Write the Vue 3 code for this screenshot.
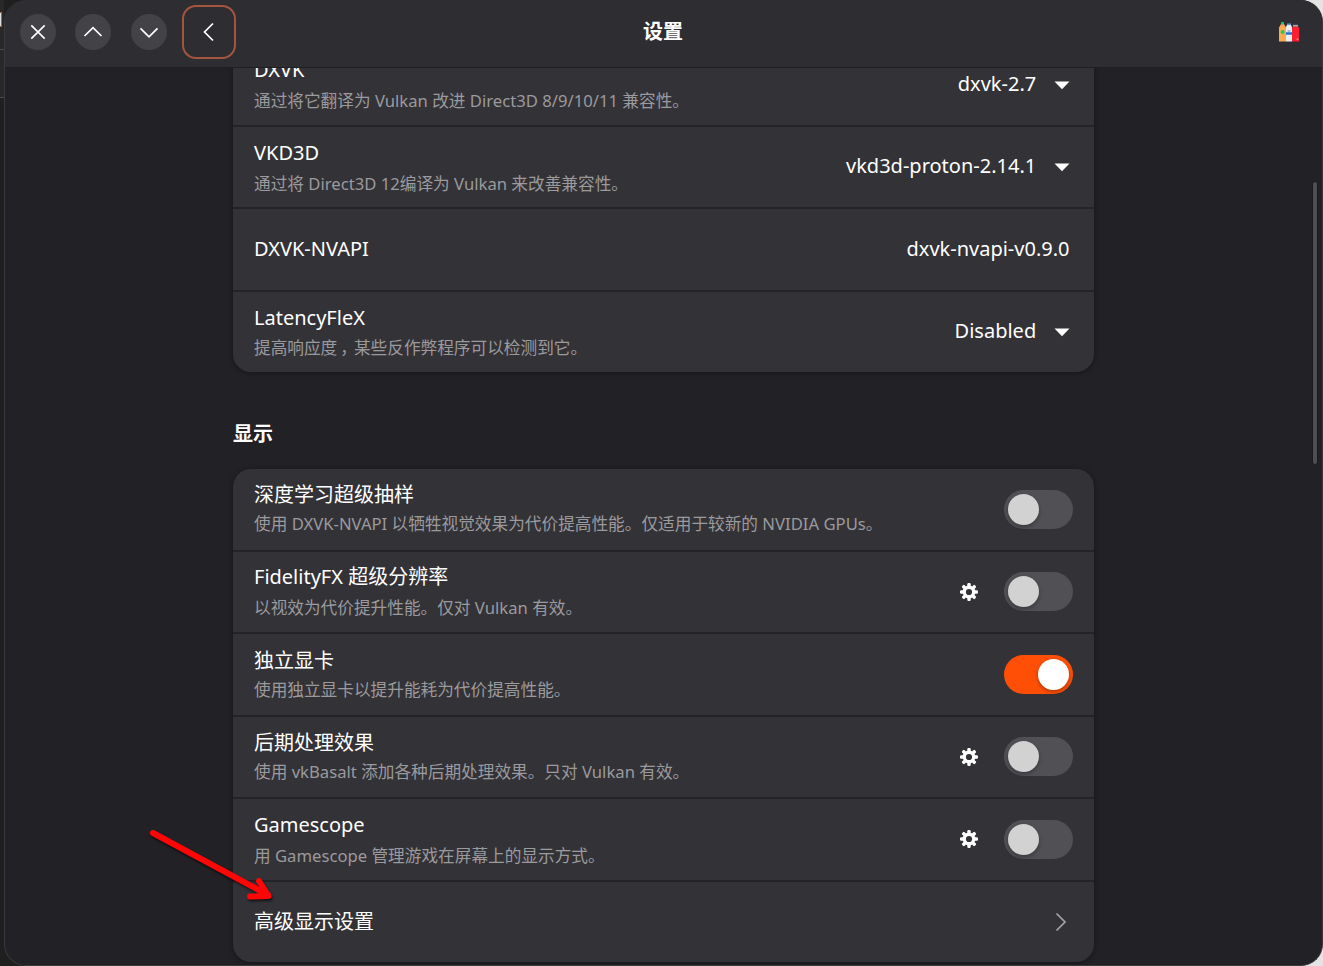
<script setup>
const runtime = [
  { title: 'DXVK', sub: ['通过将它翻译为 Vulkan 改进 Direct3D 8/9/10/11 兼容性。'], value: 'dxvk-2.7', menu: true },
  { title: 'VKD3D', sub: ['通过将 Direct3D 12编译为 Vulkan 来改善兼容性。'], value: 'vkd3d-proton-2.14.1', menu: true },
  { title: 'DXVK-NVAPI', value: 'dxvk-nvapi-v0.9.0' },
  { title: 'LatencyFleX', sub: ['提高响应度', '，', '某些反作弊程序可以检测到它。'], value: 'Disabled', menu: true },
]
const display = [
  { title: '深度学习超级抽样', sub: '使用 DXVK-NVAPI 以牺牲视觉效果为代价提高性能。仅适用于较新的 NVIDIA GPUs。', tone: 'cjk' },
  { title: 'FidelityFX 超级分辨率', sub: '以视效为代价提升性能。仅对 Vulkan 有效。', gear: true, tone: 'latin' },
  { title: '独立显卡', sub: '使用独立显卡以提升能耗为代价提高性能。', on: true, tone: 'pure' },
  { title: '后期处理效果', sub: '使用 vkBasalt 添加各种后期处理效果。只对 Vulkan 有效。', gear: true, tone: 'cjk' },
  { title: 'Gamescope', sub: '用 Gamescope 管理游戏在屏幕上的显示方式。', gear: true, tone: 'latin' },
]
</script>

<template>
  <div class="desktop">
    <div class="behind"><i class="chip"></i></div>
    <div class="window">
      <header class="bar">
        <div class="controls">
          <button class="round"><svg width="36" height="36" viewBox="0 0 36 36"><path d="M11.3 11.3 24.7 24.7M24.7 11.3 11.3 24.7" /></svg></button>
          <button class="round"><svg width="36" height="36" viewBox="0 0 36 36"><path d="M9.5 22 18 13.6 26.500 22" /></svg></button>
          <button class="round"><svg width="36" height="36" viewBox="0 0 36 36"><path d="M9.500 14.300 18 22.800 26.500 14.300" /></svg></button>
          <button class="back"><svg width="36" height="36" viewBox="0 0 36 36"><path d="M22 9.500 13.500 18 22 26.500" /></svg></button>
        </div>
        <h1>设置</h1>
        <svg class="app" width="22" height="22" viewBox="0 0 22 22">
          <path d="M3 3h3l2 3.500V20.500H1V6.500z" fill="#fdab4f" />
          <rect x="3" y="1" width="3" height="2" rx=".6" fill="#16c65b" />
          <rect x="3" y="3" width="3" height="1.300" fill="#b99a78" />
          <circle cx="4.600" cy="11" r="2" fill="#20cf55" />
          <path d="M9 4h4l1 2V20.500H8V6z" fill="#eeeef0" />
          <rect x="9" y="2.500" width="4" height="1.600" fill="#5b9be8" />
          <path d="M9.500 9h3v2.500h-3z" fill="#9dbdec" />
          <path d="M8 11.200h6v2.600H8z" fill="#1f73d8" />
          <rect x="15" y="3.800" width="5" height="2" fill="#aaa6a6" />
          <path d="M14.700 5.800h5.500l1 1.500v13.200H14V7z" fill="#fb1f2f" />
          <path d="M18.500 17.500h2v1.500h-2z" fill="#ff8088" />
        </svg>
      </header>

      <main class="scroll">
        <div class="column">
          <section class="card first">
            <div v-for="r in runtime" :key="r.title" class="row">
              <div class="text">
                <div class="title">{{ r.title }}</div>
                <div v-if="r.sub" class="sub"><span v-for="(s, i) in r.sub" :key="i" :class="{ comma: s === '，' }">{{ s }}</span></div>
              </div>
              <div class="value">{{ r.value }}</div>
              <svg v-if="r.menu" class="caret" width="16" height="9" viewBox="0 0 16 9"><path d="M.5.5h15L8 8.300z" /></svg>
            </div>
          </section>

          <h2>显示</h2>

          <section class="card second">
            <div v-for="r in display" :key="r.title" class="row switchrow" :class="r.tone">
              <div class="text">
                <div class="title">{{ r.title }}</div>
                <div class="sub">{{ r.sub }}</div>
              </div>
              <svg v-if="r.gear" class="gear" width="18" height="18" viewBox="-9 -9 18 18">
                <g fill="#fff">
                  <rect v-for="a in 4" :key="a" x="-1.700" y="-9" width="3.400" height="18" rx="1.200" :transform="`rotate(${a * 45})`" />
                  <circle r="6.400" />
                </g>
                <circle r="3.100" fill="#333237" />
              </svg>
              <div class="switch" :class="{ on: r.on }"><i></i></div>
            </div>
            <div class="row switchrow">
              <div class="text"><div class="title">高级显示设置</div></div>
              <svg class="next" width="12" height="20" viewBox="0 0 12 20"><path d="M1.500 1.500 10 10 1.500 18.500" /></svg>
            </div>
          </section>
        </div>
        <i class="thumb"></i>
      </main>
    </div>
    <svg class="arrow" width="140" height="90" viewBox="0 0 140 90">
      <path d="M13 13 128 75" />
      <path d="M119 61 128.500 76 110 76.500" />
    </svg>
  </div>
</template>

<style>
body { margin: 0; background: #222126; overflow: hidden; }
</style>

<style scoped>
* { box-sizing: border-box; }
.desktop {
  position: relative; width: 1323px; height: 966px; overflow: hidden;
  background: linear-gradient(90deg, #1f1f1f 0, #1f1f1f 600px, #e4e4e4 600px);
  font-family: "Noto Sans", "Noto Sans CJK SC", sans-serif; color: #fff;
  display: flex;
}
.behind { width: 4px; height: 98px; flex: none; background: #282828; border-bottom: 1px solid #4a4a4a; padding-top: 12px; background-image: linear-gradient(#4a4a4a, #4a4a4a); background-size: 4px 1px; background-position: 0 49px; background-repeat: no-repeat; }
.chip { display: block; width: 2px; height: 15px; background: #dedede; border: solid #a0643c; border-width: 1px 1px 1px 0; }
.window {
  width: 1319px; height: 966px; flex: none; border: 1px solid #39383b; border-top: 0;
  border-radius: 22px; overflow: hidden; background: #222126;
  display: flex; flex-direction: column;
}
.bar { height: 68px; flex: none; background: #2e2d32; border-bottom: 1px solid #1f1e22; display: grid; grid-template-columns: 1fr auto 1fr; align-items: center; padding: 0 22px 3px 15px; }
.controls { display: flex; align-items: center; gap: 19.400px; }
button { border: 0; padding: 0; background: none; display: flex; align-items: center; justify-content: center; flex: none; }
button svg { fill: none; stroke: #fff; stroke-width: 1.700; display: block; }
.round { width: 36px; height: 36px; border-radius: 50%; background: #434247; }
.back { width: 54px; height: 54px; border: 2px solid #a3553d; border-radius: 14px; margin-left: -4.300px; }
h1 { margin: 0 0 0 6px; font-size: 20px; line-height: 30px; font-weight: 700; }
.app { justify-self: end; }
.scroll { flex: 1; position: relative; overflow: hidden; display: flex; justify-content: center; }
.column { width: 861px; margin-top: -24px; flex: none; }
.card { background: #333237; border-radius: 18px; box-shadow: 0 1px 4px 1px rgba(0,0,0,.28); }
.row { height: 82.500px; display: flex; align-items: center; padding: 0 24.500px 0 21px; border-bottom: 2px solid #242328; }
.row:last-child { height: 80px; border-bottom: 0; }
.switchrow { padding-right: 21px; }
.text { flex: 1; min-width: 0; }
.title { font-size: 20px; line-height: 30px; white-space: nowrap; }
.sub { font-size: 16.670px; line-height: 24px; margin-top: 4px; color: #9b9a9d; white-space: nowrap; }
.first .row:last-child .sub { margin-top: 3px; }
.latin .text { padding-bottom: 1px; }
.cjk .sub { margin-top: 2px; }
.cjk .text { padding-bottom: 2px; }
.pure .sub { margin-top: 2px; }
.comma { margin-left: 3px; margin-right: -3px; }
.value { font-size: 20px; line-height: 30px; padding-bottom: 1px; }
.caret { margin: 2px 0 0 17.300px; fill: #fff; }
h2 { margin: 45px 0 0; height: 52.500px; font-size: 20px; line-height: 34px; font-weight: 700; }
.gear { margin-right: 26px; }
.switch { width: 69px; height: 39px; border-radius: 20px; background: #505055; padding: 4px; display: flex; flex: none; }
.switch i { width: 31px; height: 31px; border-radius: 50%; background: #d2d2d2; box-shadow: 0 2px 4px rgba(0,0,0,.3); }
.switch.on { background: #ff4f06; justify-content: flex-end; }
.switch.on i { background: #fff; }
.next { fill: none; stroke: #a5a5a8; stroke-width: 1.700; margin-right: 6px; }
.thumb { position: absolute; right: 4px; top: 113px; width: 6px; height: 284px; border-radius: 3px; background: #4f4e52; border: 1px solid #1a191d; }
.arrow { position: absolute; left: 140px; top: 820px; fill: none; stroke: #fe0606; stroke-width: 6; stroke-linecap: round; stroke-linejoin: round; filter: drop-shadow(1px 2px 1px rgba(0,0,0,.6)); }
</style>
